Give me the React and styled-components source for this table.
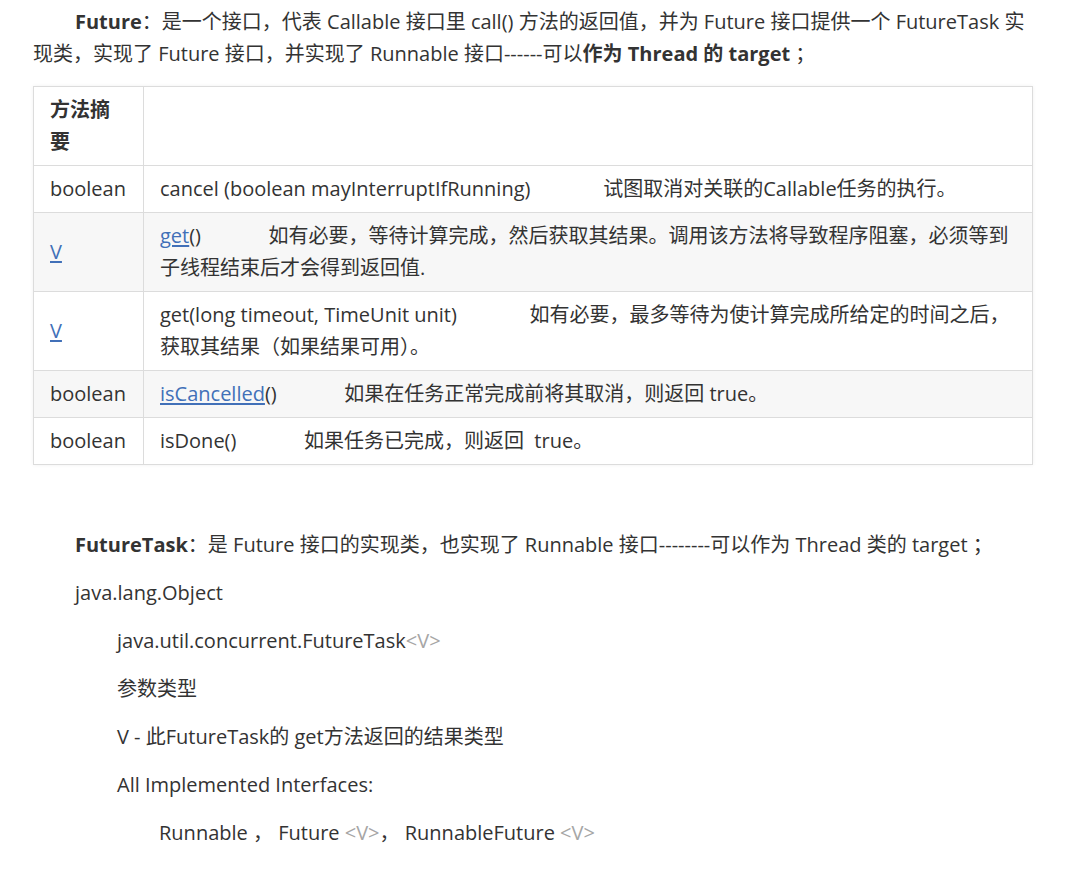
import React from "react";
import styled, { createGlobalStyle } from "styled-components";

const Global = createGlobalStyle`
  html, body { margin: 0; padding: 0; background: #fff; }
  body {
    font-family: "Open Sans", "Noto Sans CJK SC", sans-serif;
    font-size: 20px;
    color: #333;
  }
`;

const Page = styled.div`
  width: 1000px;
  padding: 6px 0 0 33px;
`;

const Para = styled.p`
  margin: 0 0 16px;
  line-height: 32px;
  text-indent: ${(p) => p.$indent || 0}px;
  padding-left: ${(p) => p.$pad || 0}px;
`;

const B = styled.strong`
  font-weight: 700;
`;

const Gen = styled.span`
  color: #a6a6a6;
`;

const Link = styled.a`
  color: #4170b8;
  text-decoration: underline;
  text-underline-offset: 2px;
  cursor: pointer;
`;

const Table = styled.table`
  width: 1000px;
  table-layout: fixed;
  border-collapse: collapse;
  box-shadow: 0 0 4px rgba(0, 0, 0, 0.06);
  margin: 0;
`;

const FirstCol = styled.col`
  width: 110px;
`;

const Row = styled.tr`
  background: ${(p) => (p.$striped ? "#f7f7f7" : "#fff")};
`;

const Head = styled.th`
  border: 1px solid #dcdcdc;
  padding: 7px 16px;
  line-height: 32px;
  text-align: left;
  vertical-align: middle;
  font-weight: 700;
`;

const Cell = styled.td`
  border: 1px solid #dcdcdc;
  padding: 7px 16px;
  line-height: 32px;
  text-align: left;
  vertical-align: middle;
`;

const Section = styled.div`
  margin-top: 64px;
`;

const gap = (n) => "\u00a0".repeat(n);

export default function App() {
  return (
    <>
      <Global />
      <Page>
        <Para $indent={42}>
          <B>Future</B>：是一个接口，代表 Callable 接口里 call() 方法的返回值，并为 Future 接口提供一个 FutureTask 实现类，实现了 Future 接口，并实现了 Runnable 接口------可以<B>作为 Thread 的 target</B> ；
        </Para>
        <Table>
          <colgroup>
            <FirstCol />
            <col />
          </colgroup>
          <thead>
            <Row>
              <Head>方法摘要</Head>
              <Head />
            </Row>
          </thead>
          <tbody>
            <Row>
              <Cell>boolean</Cell>
              <Cell>
                cancel (boolean mayInterruptIfRunning){gap(14)}试图取消对关联的Callable任务的执行。
              </Cell>
            </Row>
            <Row $striped>
              <Cell>
                <Link>V</Link>
              </Cell>
              <Cell>
                <Link>get</Link>(){gap(13)}如有必要，等待计算完成，然后获取其结果。调用该方法将导致程序阻塞，必须等到子线程结束后才会得到返回值.
              </Cell>
            </Row>
            <Row>
              <Cell>
                <Link>V</Link>
              </Cell>
              <Cell>
                get(long timeout, TimeUnit unit){gap(14)}如有必要，最多等待为使计算完成所给定的时间之后，获取其结果（如果结果可用）。
              </Cell>
            </Row>
            <Row $striped>
              <Cell>boolean</Cell>
              <Cell>
                <Link>isCancelled</Link>(){gap(13)}如果在任务正常完成前将其取消，则返回 true。
              </Cell>
            </Row>
            <Row>
              <Cell>boolean</Cell>
              <Cell>
                isDone(){gap(13)}如果任务已完成，则返回{gap(1)} true。
              </Cell>
            </Row>
          </tbody>
        </Table>
        <Section>
          <Para $pad={42}>
            <B>FutureTask</B>：是 Future 接口的实现类，也实现了 Runnable 接口--------可以作为 Thread 类的 target ；
          </Para>
          <Para $pad={42}>java.lang.Object</Para>
          <Para $pad={84}>
            java.util.concurrent.FutureTask<Gen>&lt;V&gt;</Gen>
          </Para>
          <Para $pad={84}>参数类型</Para>
          <Para $pad={84}>V - 此FutureTask的 get方法返回的结果类型</Para>
          <Para $pad={84}>All Implemented Interfaces:</Para>
          <Para $pad={126}>
            Runnable ， Future <Gen>&lt;V&gt;</Gen>， RunnableFuture <Gen>&lt;V&gt;</Gen>
          </Para>
        </Section>
      </Page>
    </>
  );
}
